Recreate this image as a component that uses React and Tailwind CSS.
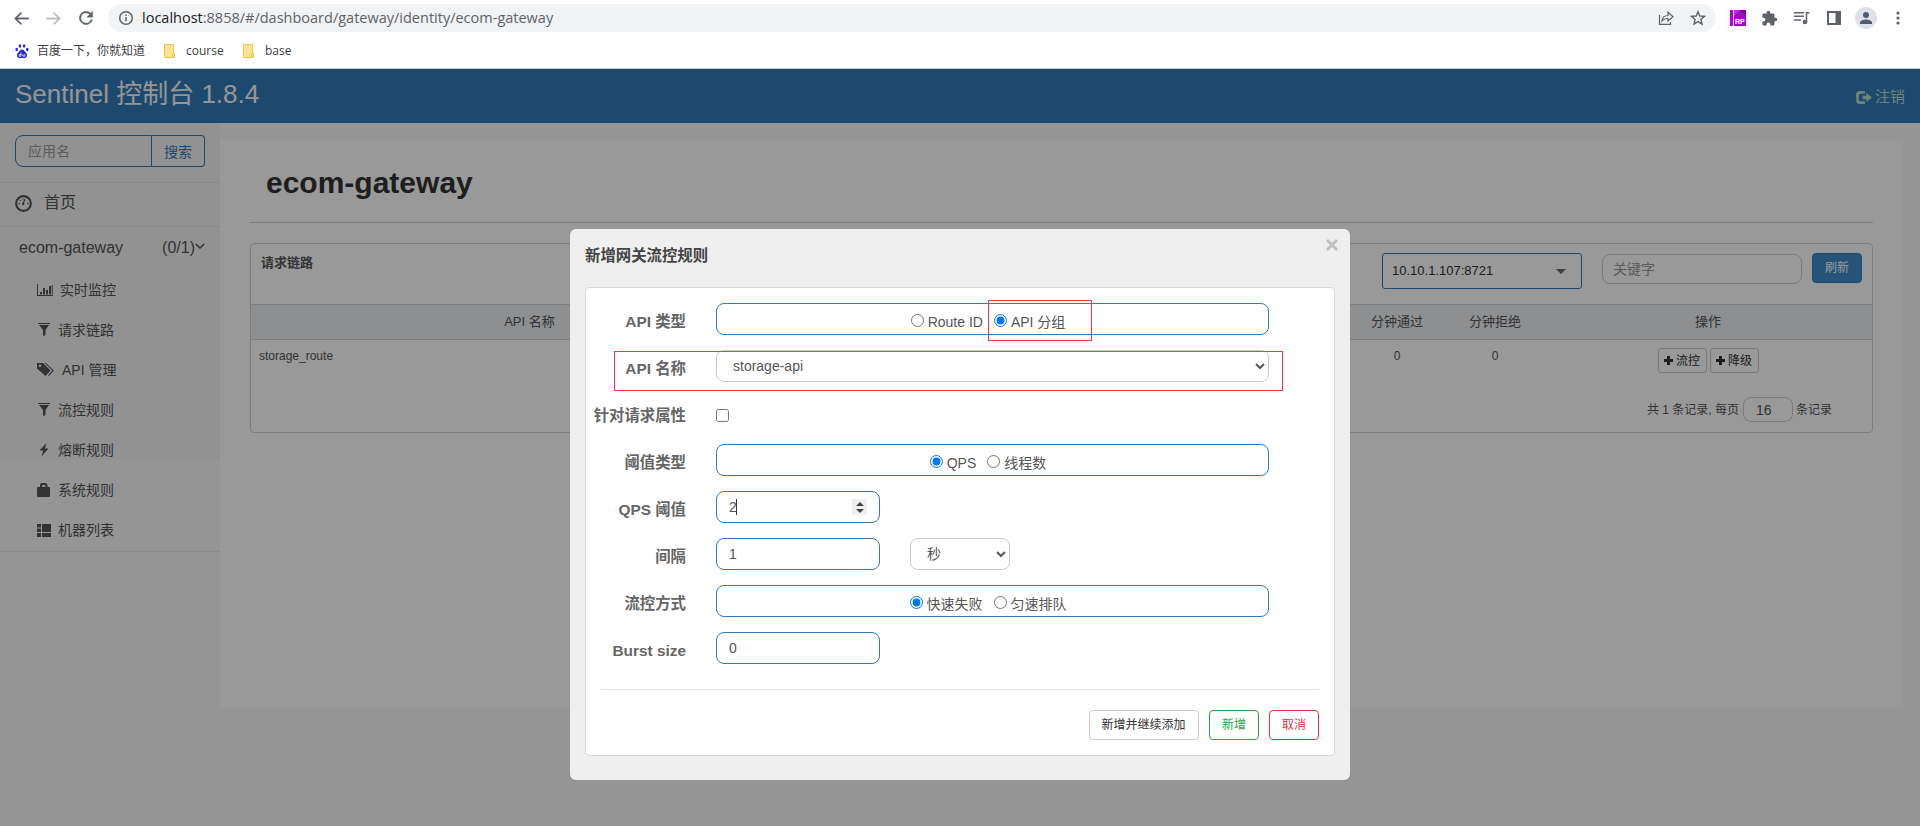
import clsx from 'clsx';

const menu = [
  { icon: 'chart', label: '实时监控', gap: 'gap-[6px]' },
  { icon: 'filter', label: '请求链路', gap: 'gap-1' },
  { icon: 'tags', label: 'API 管理', gap: 'gap-2' },
  { icon: 'filter', label: '流控规则', gap: 'gap-1' },
  { icon: 'flash', label: '熔断规则', gap: 'gap-1' },
  { icon: 'lock', label: '系统规则', gap: 'gap-1' },
  { icon: 'list', label: '机器列表', gap: 'gap-1' },
];

const glyphs = {
  chart: <path d="M0 2h1v11h15v1H0zM3 10h2v2.500H3zM6 6h2v6.500H6zM9 8h2v4.500H9zM12 4h2v8.500h-2zM14.700 3h1v9.500h-1z" />,
  filter: <path d="M1 1h12v1H1zM2 3h10L8.500 8v5L6 14.200V8z" />,
  tags: (
    <>
      <path fillRule="evenodd" d="M0 1v5.500L8.500 14l5-5.500L6 1zM3 2.500a1.300 1.300 0 1 1 0 2.600 1.300 1.300 0 0 1 0-2.600z" />
      <path d="M7.500 1h1.300l8 7.500L12 14l-.9-.8 4.300-4.700z" />
    </>
  ),
  flash: <path d="M9.500 1 2.500 8.500h3.800L4.500 14.500l7-8H8z" />,
  lock: <path d="M3 5V3.500C3 1.500 4 1 5 1h3c1.500 0 2.500 1 2.500 2.500V5H12q1 0 1 1v8q0 1-1 1H1q-1 0-1-1V6q0-1 1-1zM5 5h3.500V4q0-1-1-1h-1.500q-1 0-1 1z" />,
  list: <path d="M0 2h4v3.500H0zM5 2h9v8H5zM0 6.500h4V10H0zM0 11h4v4H0zM5 11h9v4H5z" />,
};

function Glyph({ name }) {
  return (
    <svg className="h-4 w-[17px] shrink-0" viewBox="0 0 17 16" fill="currentColor">
      {glyphs[name]}
    </svg>
  );
}

function Plus() {
  return (
    <svg className="h-[9px] w-[9px]" viewBox="0 0 9 9" fill="currentColor">
      <path d="M3 0h3v3h3v3H6v3H3V6H0V3h3z" />
    </svg>
  );
}

function BrowserBar() {
  return (
    <div className="h-[69px] border-b border-[#c9c9c9] bg-white font-['Open_Sans','Noto_Sans_CJK_SC',sans-serif] text-[#5f6368]">
      <div className="flex h-9 items-center">
        <div className="flex w-[108px] shrink-0 items-center gap-[13px] pl-3">
          <svg className="h-[19px] w-[19px]" viewBox="0 0 24 24" fill="currentColor" stroke="currentColor" strokeWidth=".4">
            <path d="M21 11H6.830l5.600-5.600L11 4l-8 8 8 8 1.410-1.410L6.830 13H21z" />
          </svg>
          <svg className="h-[19px] w-[19px] text-[#b9bbbe]" viewBox="0 0 24 24" fill="currentColor" stroke="currentColor" strokeWidth=".4">
            <path d="M3 13h14.170l-5.600 5.600L13 20l8-8-8-8-1.410 1.410L17.170 11H3z" />
          </svg>
          <svg className="h-5 w-5" viewBox="0 0 24 24" fill="currentColor" stroke="currentColor" strokeWidth=".4">
            <path d="M17.650 6.350A8 8 0 1 0 19.730 14h-2.080A6 6 0 1 1 12 6c1.660 0 3.140.69 4.220 1.780L13 11h7V4z" />
          </svg>
        </div>
        <div className="flex h-7 w-[1608px] shrink-0 items-center rounded-full bg-[#f1f3f4] pl-[10px]">
          <svg className="h-4 w-4" viewBox="0 0 16 16" fill="none" stroke="currentColor" strokeWidth="1.500">
            <circle cx="8" cy="8" r="6.300" />
            <path d="M8 7.200v4M8 4.500V6" />
          </svg>
          <span className="ml-2 flex-1 text-[14.5px] leading-7 whitespace-nowrap">
            <span className="text-[#202124]">localhost</span>:8858/#/dashboard/gateway/identity/ecom-gateway
          </span>
          <svg className="h-4 w-4" viewBox="0 0 16 16" fill="none" stroke="currentColor" strokeWidth="1.200">
            <path d="M1.500 5v9.400h11V12" />
            <path d="M4 11c.4-4 2.500-5.500 6-5.500V2.200L15 6.800 10 11V8.500C7.500 8.500 5.500 9 4 11z" />
          </svg>
          <svg className="mr-[10px] ml-4 h-4 w-4" viewBox="0 0 16 16" fill="none" stroke="currentColor" strokeWidth="1.400">
            <path d="m8 1.700 1.800 4.300 4.700.4-3.600 3.100 1.100 4.600L8 11.600l-4 2.500 1.100-4.600L1.500 6.400 6.200 6z" />
          </svg>
        </div>
        <div className="flex items-center pl-[14px]">
          <svg className="h-4 w-4" viewBox="0 0 16 16">
            <path fill="#a30ac4" d="M0 0h16v16H0z" />
            <path fill="#d51cf0" d="m4 6 6-6H4z" />
            <path fill="#7a069d" d="m10 0 6 6V0z" />
            <path fill="#f0c8fa" d="M3 0h1v16H3z" />
            <text x="5" y="14" fill="#fff" fontSize="7" fontWeight="700" fontFamily="Liberation Sans">RP</text>
          </svg>
          <svg className="ml-[15px] h-[17px] w-[17px]" viewBox="0 0 24 24" fill="currentColor">
            <path d="M20.500 11H19V7a2 2 0 0 0-2-2h-4V3.500a2.500 2.500 0 0 0-5 0V5H4a2 2 0 0 0-2 2v3.800h1.500a2.700 2.700 0 0 1 0 5.400H2V20a2 2 0 0 0 2 2h3.800v-1.500a2.700 2.700 0 0 1 5.400 0V22H17a2 2 0 0 0 2-2v-4h1.500a2.500 2.500 0 0 0 0-5z" />
          </svg>
          <svg className="ml-4 h-4 w-4" viewBox="0 0 16 16" fill="none" stroke="currentColor" strokeWidth="1.500">
            <path d="M0 2.700h10M0 6.300h10M0 9.900h7M15.500 2.700h-3V12" />
            <circle cx="11" cy="12" r="1.600" fill="currentColor" />
          </svg>
          <svg className="ml-[17px] h-[14px] w-[14px]" viewBox="0 0 14 14">
            <path fill="currentColor" fillRule="evenodd" d="M0 0h14v14H0zM2 2v10h6.500V2z" />
          </svg>
          <svg className="ml-[14px] h-[22px] w-[22px]" viewBox="0 0 22 22">
            <circle cx="11" cy="11" r="11" fill="#dee1e6" />
            <circle cx="11" cy="8" r="3" fill="#4f5b76" />
            <path fill="#4f5b76" d="M5 17v-1.500c0-2 4-3 6-3s6 1 6 3V17z" />
          </svg>
          <svg className="ml-[19px] h-[14px] w-1" viewBox="0 0 4 14" fill="currentColor">
            <circle cx="2" cy="2" r="1.600" />
            <circle cx="2" cy="7" r="1.600" />
            <circle cx="2" cy="12" r="1.600" />
          </svg>
        </div>
      </div>
      <div className="flex h-7 items-center pb-0.5 pl-[15px] pt-1 text-xs text-[#3c4043]">
        <svg className="mr-[8px] h-[14px] w-[14px]" viewBox="0 0 14 14" fill="#2529d8">
          <ellipse cx="4.900" cy="2" rx="1.300" ry="1.800" />
          <ellipse cx="9.100" cy="2" rx="1.300" ry="1.800" />
          <ellipse cx="1.700" cy="5.500" rx="1.300" ry="1.700" />
          <ellipse cx="12.300" cy="5.500" rx="1.300" ry="1.700" />
          <path d="M7 5.500c2 0 2.500 2 4 3.200 1.800 1.500 1 5.300-1.500 5.300h-5C2 14 1.200 10.200 3 8.700 4.500 7.500 5 5.500 7 5.500z" />
          <path d="M6 8.500v3.700H4.200v-1.700H6M8 10.200v2h1.800v-2" fill="none" stroke="#fff" strokeWidth=".8" />
        </svg>
        <span className="w-[127px]">百度一下，你就知道</span>
        <Folder />
        <span className="ml-[10px] w-[57px]">course</span>
        <Folder />
        <span className="ml-[10px]">base</span>
      </div>
    </div>
  );
}

function Folder() {
  return (
    <svg className="h-[14px] w-3" viewBox="0 0 12 14">
      <path d="M.5.500h9v9h1v4H.5z" fill="#ffe593" stroke="#e8c34f" />
      <path d="M8.500 13V9.500" stroke="#e8c34f" />
    </svg>
  );
}

function Sidebar() {
  return (
    <aside className="h-[428px] w-[220px] shrink-0 text-[#555]">
      <div className="h-[337px] bg-[#f3f3f3]">
        <div className="h-[60px] border-b border-[#e7e7e7] px-[15px] pt-3">
          <div className="flex h-8 text-sm leading-[30px]">
            <div className="w-[137px] rounded-l-lg border border-[#337ab7] pl-3 text-[#999]">应用名</div>
            <div className="flex-1 rounded-r border border-l-0 border-[#337ab7] pl-3 pt-px text-[#337ab7]">搜索</div>
          </div>
        </div>
        <div className="flex h-11 items-center border-b border-[#e7e7e7] pb-[3px] pl-[15px] text-base">
          <svg className="mr-[12px] h-[17px] w-[17px]" viewBox="0 0 16 16" fill="none" stroke="currentColor">
            <circle cx="8" cy="8" r="6.900" strokeWidth="2" />
            <path d="M7.500 8.500 9.300 4M3.500 8h1.200M11.300 8h1.200M4.700 4.700l.8.800M7.500 3.200v1" strokeWidth="1.200" />
            <circle cx="7.700" cy="8.500" r="1.100" fill="currentColor" stroke="none" />
          </svg>
          首页
        </div>
        <div className="flex h-10 items-center justify-between pt-0.5 pl-[19px] pr-[15px] text-base">
          <span>ecom-gateway</span>
          <span className="flex items-center">
            (0/1)
            <svg className="mb-1 h-2.5 w-2.5" viewBox="0 0 10 10" fill="none" stroke="currentColor" strokeWidth="1.600">
              <path d="m.8 3 4.200 4 4.200-4" />
            </svg>
          </span>
        </div>
        <ul className="pt-[3px] text-sm">
          {menu.map((m) => (
            <li key={m.icon + m.label} className={clsx('flex h-10 items-center pl-[37px]', m.gap)}>
              <Glyph name={m.icon} />
              {m.label}
            </li>
          ))}
        </ul>
        <div className="mt-px border-b border-[#e7e7e7]" />
      </div>
    </aside>
  );
}

function ResourcePanel() {
  return (
    <section className="h-[190px] rounded border border-[#d3d3d3] text-[13px] text-[#555]">
      <div className="flex h-[60px] pl-2.5 pr-[10px] pt-[9px]">
        <h2 className="flex-1 leading-5 font-bold">请求链路</h2>
        <div className="mr-5 flex h-9 w-[200px] items-center justify-between rounded-[3px] border border-[#337ab7] pl-[9px] pr-[15px] text-[#333]">
          10.10.1.107:8721
          <svg className="h-[5px] w-2.5" viewBox="0 0 10 5" fill="#666">
            <path d="M0 0h10L5 5z" />
          </svg>
        </div>
        <div className="mt-px mr-2.5 h-[30px] w-[200px] rounded-lg border border-[#ccc] pl-2.5 text-sm leading-7 text-[#999]">
          关键字
        </div>
        <button className="h-[30px] w-[50px] rounded border border-[#357ebd] bg-[#428bca] text-xs text-white">刷新</button>
      </div>
      <div className="flex h-9 items-center border-y border-[#d3d3d3] bg-[#ebeef2] text-center">
        <span className="w-[557px]">API 名称</span>
        <span className="flex-1" />
        <span className="w-[98px]">分钟通过</span>
        <span className="w-[98px]">分钟拒绝</span>
        <span className="w-[328px]">操作</span>
      </div>
      <div className="flex text-center text-xs">
        <span className="w-[557px] pt-[7px] pl-2 text-left leading-[18px]">storage_route</span>
        <span className="flex-1" />
        <span className="w-[98px] pt-[7px] leading-[18px]">0</span>
        <span className="w-[98px] pt-[7px] leading-[18px]">0</span>
        <div className="flex w-[328px] justify-center gap-[3px] pt-2 text-[#333]">
          {['流控', '降级'].map((t) => (
            <button key={t} className="flex h-[25px] w-[49px] items-center justify-center gap-[3px] rounded-[3px] border border-[#ccc]">
              <Plus />
              {t}
            </button>
          ))}
        </div>
      </div>
      <div className="mt-6 flex h-[25px] items-center justify-end pr-10 text-xs">
        共 1 条记录, 每页
        <span className="mr-[3px] ml-1 h-[25px] w-[50px] rounded-lg border border-[#ccc] pl-3 text-sm leading-[25px]">16</span>
        条记录
      </div>
    </section>
  );
}

function Row({ label, children }) {
  return (
    <div className="flex h-8">
      <label className="w-[100px] shrink-0 pt-[3px] text-right text-[15.4px] leading-[31px] font-bold whitespace-nowrap text-[#666]">
        {label}
      </label>
      <div className="ml-[30px] flex">{children}</div>
    </div>
  );
}

function RadioBox({ name, options, value }) {
  return (
    <div className="flex h-8 w-[553px] justify-center gap-[11px] rounded-lg border border-[#337ab7] pt-[5px] pr-[9px]">
      {options.map((o) => (
        <label key={o} className="flex items-center gap-1 leading-7">
          <input type="radio" name={name} defaultChecked={o === value} className="mb-[3px] h-[13px] w-[13px]" />
          {o}
        </label>
      ))}
    </div>
  );
}

function NumberBox({ value, active }) {
  return (
    <div className="flex h-8 w-[164px] items-center rounded-lg border border-[#337ab7] pl-3 pr-3">
      {value}
      {active && (
        <>
          <span className="-ml-px h-4 w-px bg-[#333]" />
          <span className="ml-auto flex h-4 w-[15px] items-center justify-center bg-[#efefef]">
            <svg className="h-[11px] w-2" viewBox="0 0 8 11" fill="#444">
              <path d="M4 0l4 4H0zM4 11l4-4H0z" />
            </svg>
          </span>
        </>
      )}
    </div>
  );
}

function RuleDialog() {
  return (
    <div className="relative h-[551px] w-[780px] rounded-md bg-[#efefef] px-[15px] text-sm text-[#555]">
      <div className="flex h-[58px] justify-between">
        <h3 className="pt-[15px] text-[15.4px] leading-6 font-bold text-[#444]">新增网关流控规则</h3>
        <svg className="-mr-[3px] mt-2.5 h-3 w-3" viewBox="0 0 12 12" stroke="#bfbfbf" strokeWidth="2.800">
          <path d="m1 1 10 10M11 1 1 11" />
        </svg>
      </div>
      <div className="h-[469px] rounded border border-[#d9d9d9] bg-white pt-[15px]">
        <div className="flex flex-col gap-[15px]">
          <Row label="API 类型">
            <RadioBox name="apiType" options={['Route ID', 'API 分组']} value="API 分组" />
          </Row>
          <Row label="API 名称">
            <select className="h-8 w-[553px] rounded-lg border border-[#ccc] bg-white px-3">
              <option>storage-api</option>
            </select>
          </Row>
          <Row label="针对请求属性">
            <input type="checkbox" className="mt-3 h-[13px] w-[13px]" />
          </Row>
          <Row label="阈值类型">
            <RadioBox name="grade" options={['QPS', '线程数']} value="QPS" />
          </Row>
          <Row label="QPS 阈值">
            <NumberBox value="2" active />
          </Row>
          <Row label="间隔">
            <NumberBox value="1" />
            <select className="ml-[30px] h-8 w-[100px] rounded-lg border border-[#ccc] bg-white px-3">
              <option>秒</option>
            </select>
          </Row>
          <Row label="流控方式">
            <RadioBox name="behavior" options={['快速失败', '匀速排队']} value="快速失败" />
          </Row>
          <Row label="Burst size">
            <NumberBox value="0" />
          </Row>
        </div>
        <div className="mx-[15px] mt-[25px] flex justify-end gap-2.5 border-t border-[#e3e3e3] pt-5 text-xs">
          <button className="h-[30px] w-[110px] rounded border border-[#ccc] pr-px text-[#333]">新增并继续添加</button>
          <button className="h-[30px] w-[50px] rounded border border-[#28a745] text-[#28a745]">新增</button>
          <button className="h-[30px] w-[50px] rounded border border-[#dc3545] text-[#dc3545]">取消</button>
        </div>
      </div>
      {/* highlight frames over the form */}
      <div className="absolute top-[71px] left-[418px] h-[41px] w-[104px] border border-[#f43b3b]" />
      <div className="absolute top-[122px] left-[44px] h-10 w-[669px] border border-[#f43b3b]" />
    </div>
  );
}

export default function App() {
  return (
    <div className="h-[826px] w-[1920px] overflow-hidden bg-[#f8f8f8] font-['Liberation_Sans','Noto_Sans_CJK_SC',sans-serif]">
      <BrowserBar />
      <div className="relative h-[757px]">
        <header className="flex h-[54px] justify-between bg-[#337ab7] px-[15px]">
          <h1 className="text-[26px] leading-[50px] text-[#f8f8f8]">Sentinel 控制台 1.8.4</h1>
          <a className="flex items-center gap-[3px] pt-0.5 text-[15px] text-[#b5dcc9]">
            <svg className="h-[13px] w-4" viewBox="0 0 17 14" fill="currentColor">
              <path d="M9.500 0v3H5Q3 3 3 5v4q0 2 2 2h4.500v3H4q-4 0-4-4V4q0-4 4-4zM7 5h4V2l6 5-6 5V9H7z" />
            </svg>
            注销
          </a>
        </header>
        <div className="flex">
          <Sidebar />
          <main className="mt-[17px] h-[568px] w-[1683px] bg-white px-[30px]">
            <h1 className="h-[83px] border-b border-[#d3d3d3] pt-[23px] pl-4 text-3xl leading-10 font-bold text-[#333]">ecom-gateway</h1>
            <div className="pt-5">
              <ResourcePanel />
            </div>
          </main>
        </div>
        <div className="absolute inset-0 flex items-start justify-center bg-black/40 pt-40">
          <RuleDialog />
        </div>
      </div>
    </div>
  );
}
